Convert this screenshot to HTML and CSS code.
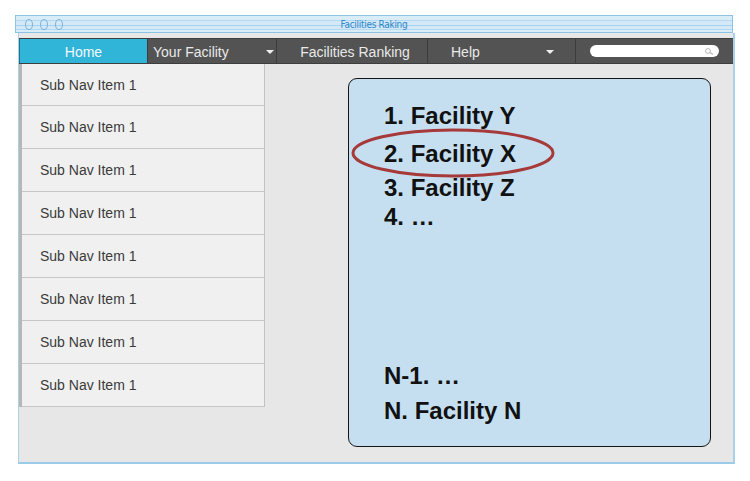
FILE: index.html
```html
<!DOCTYPE html>
<html>
<head>
<meta charset="utf-8">
<link rel="stylesheet" href="styles.css">
</head>
<body>
<div class="titlebar">
  <div class="dots"><span class="dot"></span><span class="dot"></span><span class="dot"></span></div>
  <div class="title">Facilities Raking</div>
  <div></div>
</div>
<div class="window">
  <nav class="nav">
    <div class="tab home">Home</div>
    <div class="tab drop yf"><span>Your Facility</span><span class="caret"></span></div>
    <div class="tab fr">Facilities Ranking</div>
    <div class="tab drop help"><span>Help</span><span class="caret"></span></div>
    <div class="search">
      <div class="pill">
        <svg class="mag" width="10" height="7" viewBox="0 0 10 7"><circle cx="4" cy="3" r="2.4" fill="none" stroke="#b8b8b8" stroke-width="1"/><line x1="6" y1="4.5" x2="9" y2="6.5" stroke="#b8b8b8" stroke-width="1.2"/></svg>
      </div>
    </div>
  </nav>
  <div class="main">
    <ul class="subnav">
      <li>Sub Nav Item 1</li>
      <li>Sub Nav Item 1</li>
      <li>Sub Nav Item 1</li>
      <li>Sub Nav Item 1</li>
      <li>Sub Nav Item 1</li>
      <li>Sub Nav Item 1</li>
      <li>Sub Nav Item 1</li>
      <li>Sub Nav Item 1</li>
    </ul>
    <div class="panel">
      <div class="line l1">1. Facility Y</div>
      <div class="line l2">2. Facility X</div>
      <div class="line l3">3. Facility Z</div>
      <div class="line l4">4. …</div>
      <div class="line ln1">N-1. …</div>
      <div class="line ln">N. Facility N</div>
      <svg class="ring" width="204" height="50" viewBox="0 0 204 50"><ellipse cx="102" cy="25" rx="100" ry="23" fill="none" stroke="#a63a3a" stroke-width="3"/></svg>
    </div>
  </div>
</div>
</body>
</html>
```

FILE: styles.css
```css
html, body {
  margin: 0;
  padding: 0;
  background: #ffffff;
  font-family: "Liberation Sans", Arial, sans-serif;
}

.titlebar {
  margin: 15px 0 0 15px;
  width: 718px;
  height: 18px;
  box-sizing: border-box;
  border: 1px solid #8dc2e6;
  background:
    linear-gradient(to bottom,
      #d9edf9 0px, #d9edf9 4px,
      #b3d8f0 4px, #b3d8f0 5px,
      #d3e9f8 5px, #d3e9f8 9px,
      #a9d2ee 9px, #a9d2ee 10px,
      #d3e9f8 10px, #d3e9f8 13px,
      #b3d8f0 13px, #b3d8f0 14px,
      #d9edf9 14px);
  display: grid;
  grid-template-columns: 1fr auto 1fr;
  align-items: center;
}

.dots {
  display: flex;
  gap: 7px;
  padding-left: 9px;
}

.dot {
  width: 6px;
  height: 9px;
  border: 1.5px solid #7db3dc;
  border-radius: 50%;
}

.title {
  font-family: "DejaVu Sans Condensed", "DejaVu Sans", sans-serif;
  font-size: 10px;
  color: #2d86c9;
  letter-spacing: -0.3px;
}

.window {
  margin-left: 18px;
  width: 714px;
  height: 424px;
  border-left: 1px solid #a6d0ec;
  border-right: 2px solid #a6d0ec;
  border-bottom: 2px solid #9ccbea;
  background: #e7e7e7;
  padding-top: 5px;
}

.nav {
  display: flex;
  height: 26px;
  box-sizing: border-box;
  background: #535353;
  border-top: 1px solid #3e3e3e;
  border-bottom: 1px solid #3e3e3e;
  font-size: 14px;
  color: #e9e9e9;
}

.tab {
  display: flex;
  align-items: center;
  box-sizing: border-box;
  border-right: 1px solid #3c3c3c;
  padding-top: 2px;
}

.home {
  width: 129px;
  justify-content: center;
  background: #30b4d8;
  color: #f4f8fa;
  border-left: 1px solid #2c6e86;
}

.yf {
  width: 129px;
  justify-content: space-between;
  padding-left: 5px;
  padding-right: 2px;
}

.fr {
  width: 151px;
  justify-content: center;
  padding-left: 6px;
}

.help {
  width: 148px;
  justify-content: space-between;
  padding-left: 23px;
  padding-right: 21px;
}

.caret {
  width: 0;
  height: 0;
  border-left: 4px solid transparent;
  border-right: 4px solid transparent;
  border-top: 4px solid #f0f0f0;
}

.search {
  flex: 1;
  display: flex;
  align-items: center;
  padding-left: 14px;
}

.pill {
  width: 129px;
  height: 12px;
  background: #ffffff;
  border-radius: 6px;
  display: flex;
  align-items: center;
  justify-content: flex-end;
  padding-right: 5px;
  box-sizing: border-box;
}

.main {
  display: flex;
  align-items: flex-start;
}

.subnav {
  list-style: none;
  margin: 0;
  padding: 0;
  width: 246px;
  box-sizing: border-box;
  border-left: 3px solid #b7b7b7;
  border-right: 1px solid #c2c2c2;
}

.subnav li {
  height: 43px;
  box-sizing: border-box;
  display: flex;
  align-items: center;
  padding-left: 18px;
  background: #f0f0f0;
  border-bottom: 1px solid #c6c6c6;
  font-size: 14px;
  color: #3a3a3a;
}

.subnav li:first-child {
  height: 42px;
}

.panel {
  position: relative;
  margin-left: 83px;
  margin-top: 14px;
  width: 363px;
  height: 369px;
  box-sizing: border-box;
  border: 1px solid #151515;
  border-radius: 9px;
  background: #c6dff0;
  padding: 23px 0 21px 35px;
  display: flex;
  flex-direction: column;
}

.line {
  font-size: 24px;
  font-weight: bold;
  line-height: 28px;
  color: #111111;
}

.l2 { margin-top: 10px; }
.l3 { margin-top: 6px; }
.l4 { margin-top: 1px; }
.ln1 { margin-top: auto; }
.ln { margin-top: 7px; }

.ring {
  position: absolute;
  left: 2px;
  top: 49px;
}
```
